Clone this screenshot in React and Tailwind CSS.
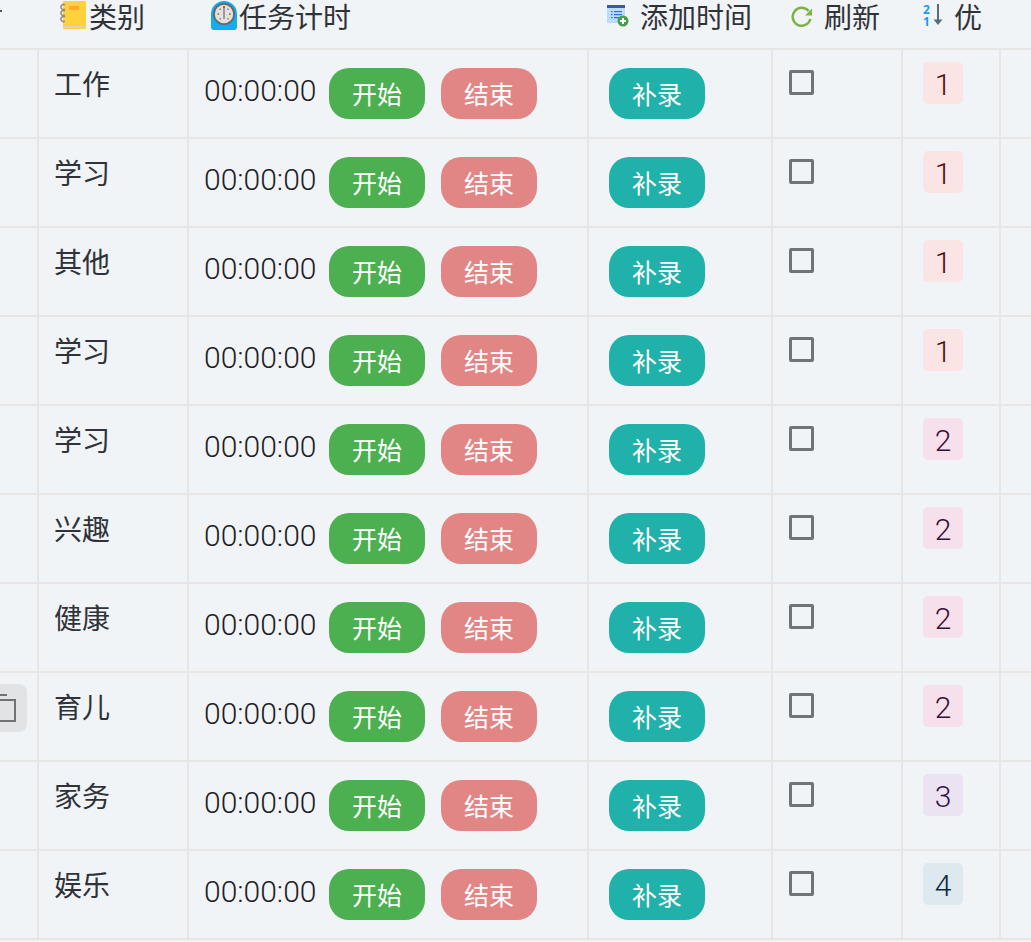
import React from "react";

const rows = [
  { category: "工作", level: 1 },
  { category: "学习", level: 1 },
  { category: "其他", level: 1 },
  { category: "学习", level: 1 },
  { category: "学习", level: 2 },
  { category: "兴趣", level: 2 },
  { category: "健康", level: 2 },
  { category: "育儿", level: 2, copy: true },
  { category: "家务", level: 3 },
  { category: "娱乐", level: 4 },
];

const levelStyles = {
  1: "bg-[#fbe4e4] text-[#4a0f0f]",
  2: "bg-[#f5e0ec] text-[#3a1035]",
  3: "bg-[#ebe3f2] text-[#33124f]",
  4: "bg-[#dde9ef] text-[#0f2a40]",
};

const gridCols = "grid grid-cols-[39px_150px_400px_184px_130px_98px_1fr]";

function NotebookIcon() {
  return (
    <svg width="26" height="30" viewBox="0 0 26 30" className="shrink-0">
      <rect x="3" y="1" width="23" height="28" rx="1" fill="#ffd23c" />
      <rect x="3" y="26" width="23" height="2" fill="#d9d4c4" />
      <rect x="9" y="6" width="10" height="4" fill="#ffab2e" />
      <g fill="none" stroke="#8d8d8d" strokeWidth="1.5">
        <path d="M5 5a2.5 2.5 0 1 0 0 4" />
        <path d="M5 11a2.5 2.5 0 1 0 0 4" />
        <path d="M5 17a2.5 2.5 0 1 0 0 4" />
      </g>
    </svg>
  );
}

function TimerIcon() {
  return (
    <svg width="26" height="30" viewBox="0 0 26 30" className="shrink-0">
      <path d="M0 14a13 13 0 0 1 26 0v13a3 3 0 0 1-3 3H3a3 3 0 0 1-3-3z" fill="#0eaeef" />
      <circle cx="13" cy="14" r="11" fill="#666" />
      <circle cx="13" cy="14" r="9.2" fill="#e4e1dc" />
      <rect x="12" y="6" width="2" height="2" fill="#e5473c" />
      <rect x="12.2" y="8" width="1.6" height="11" fill="#8a8a8a" />
      <g fill="#777">
        <rect x="6.5" y="13.2" width="1.6" height="1.6" />
        <rect x="18" y="13.2" width="1.6" height="1.6" />
        <rect x="8.5" y="8.5" width="1.4" height="1.4" />
        <rect x="16.3" y="8.5" width="1.4" height="1.4" />
        <rect x="8.5" y="18.2" width="1.4" height="1.4" />
        <rect x="16.3" y="18.2" width="1.4" height="1.4" />
      </g>
    </svg>
  );
}

function AddListIcon() {
  return (
    <svg width="22" height="22" viewBox="0 0 22 22" className="shrink-0">
      <rect x="0" y="0" width="18" height="18" fill="#bcdcf8" />
      <rect x="0" y="0" width="18" height="3" fill="#3f51b5" />
      <g fill="#2f6fd0">
        <rect x="4" y="6" width="1.5" height="1.2" />
        <rect x="7" y="6" width="8" height="1.2" />
        <rect x="4" y="9" width="1.5" height="1.2" />
        <rect x="7" y="9" width="8" height="1.2" />
        <rect x="4" y="12" width="1.5" height="1.2" />
        <rect x="7" y="12" width="6" height="1.2" />
      </g>
      <circle cx="16" cy="16" r="5.5" fill="#43a047" />
      <path d="M16 13v6M13 16h6" stroke="#fff" strokeWidth="2" />
    </svg>
  );
}

function RefreshIcon() {
  return (
    <svg width="22" height="22" viewBox="0 0 22 22" className="shrink-0">
      <path d="M17.6 6A9 9 0 1 0 19.4 14" fill="none" stroke="#7cb342" strokeWidth="2.5" />
      <path d="M21 3.5v7h-7z" fill="#7cb342" />
    </svg>
  );
}

function SortIcon() {
  return (
    <div className="relative w-[20px] h-[24px] shrink-0">
      <div className="absolute left-0 top-0 flex flex-col text-[12px] font-bold leading-[12px] text-[#2196f3]">
        <span>2</span>
        <span>1</span>
      </div>
      <svg width="10" height="22" viewBox="0 0 10 22" className="absolute left-[10px] top-0">
        <path d="M5 0v18" stroke="#546e7a" strokeWidth="2" />
        <path d="M0.5 15.5h9L5 21z" fill="#546e7a" />
      </svg>
    </div>
  );
}

function ActionButton({ label, color }) {
  return (
    <button className={`w-[96px] h-[51px] pt-[1px] rounded-[20px] text-white text-[25px] leading-none ${color}`}>
      {label}
    </button>
  );
}

function Row({ row }) {
  return (
    <div className={`${gridCols} h-[89px] border-b-2 border-[#e8e6e3]`}>
      <div className="border-r-2 border-[#e8e6e3] flex justify-end items-start pr-[10px] pt-[11px] overflow-hidden">
        {row.copy && (
          <div className="w-[40px] h-[48px] shrink-0 rounded-[8px] bg-[#e1e3e4] flex items-center justify-center">
            <svg width="30" height="30" viewBox="0 0 30 30">
              <path d="M0 2h15" stroke="#6f7375" strokeWidth="2" fill="none" />
              <path d="M2 7h21v21H2z" stroke="#6f7375" strokeWidth="2" fill="none" />
            </svg>
          </div>
        )}
      </div>
      <div className="border-r-2 border-[#e8e6e3] pl-[15px] pt-[14px] text-[28px] leading-[40px]">
        {row.category}
      </div>
      <div className="border-r-2 border-[#e8e6e3] pl-[15px] pt-[18px] flex items-start gap-[16px]">
        <span className="text-[30px] leading-[46px] w-[109px] whitespace-nowrap font-['Roboto'] font-light text-[#1d2027]">00:00:00</span>
        <ActionButton label="开始" color="bg-[#4caf50]" />
        <ActionButton label="结束" color="bg-[#e28585]" />
      </div>
      <div className="border-r-2 border-[#e8e6e3] pl-[20px] pt-[18px]">
        <ActionButton label="补录" color="bg-[#20b2aa]" />
      </div>
      <div className="border-r-2 border-[#e8e6e3] pl-[16px] pt-[20px]">
        <div className="w-[25px] h-[25px] rounded-[2px] border-[3px] border-[#707378]" />
      </div>
      <div className="border-r-2 border-[#e8e6e3] pl-[20px] pt-[12px]">
        <div className={`w-[40px] h-[42px] pt-[2px] rounded-[5px] flex items-center justify-center text-[30px] font-['Roboto'] font-light ${levelStyles[row.level]}`}>
          {row.level}
        </div>
      </div>
      <div />
    </div>
  );
}

export default function App() {
  return (
    <div
      className="w-[1031px] h-[942px] overflow-hidden bg-[#f0f4f6] text-[#2f3238]"
      style={{ fontFamily: '"Noto Sans", "Noto Sans CJK SC", sans-serif' }}
    >
      <div className={`${gridCols} h-[50px] border-b-2 border-[#e8e6e3] text-[28px] leading-[34px]`}>
        <div className="pt-[10px]">
          <div className="w-[2px] h-[2px] bg-[#555]" />
        </div>
        <div className="flex items-start pl-[21px] gap-[3px]">
          <NotebookIcon />
          <span className="whitespace-nowrap">类别</span>
        </div>
        <div className="flex items-start pl-[22px] gap-[2px]">
          <TimerIcon />
          <span className="whitespace-nowrap">任务计时</span>
        </div>
        <div className="flex items-start gap-[11px] pl-[18px]">
          <div className="pt-[5px]"><AddListIcon /></div>
          <span className="whitespace-nowrap">添加时间</span>
        </div>
        <div className="flex items-start gap-[11px] pl-[18px]">
          <div className="pt-[5px]"><RefreshIcon /></div>
          <span className="whitespace-nowrap">刷新</span>
        </div>
        <div className="flex items-start gap-[11px] pl-[20px]">
          <div className="pt-[4px]"><SortIcon /></div>
          <span className="whitespace-nowrap">优</span>
        </div>
        <div />
      </div>
      {rows.map((row, i) => (
        <Row key={i} row={row} />
      ))}
    </div>
  );
}
